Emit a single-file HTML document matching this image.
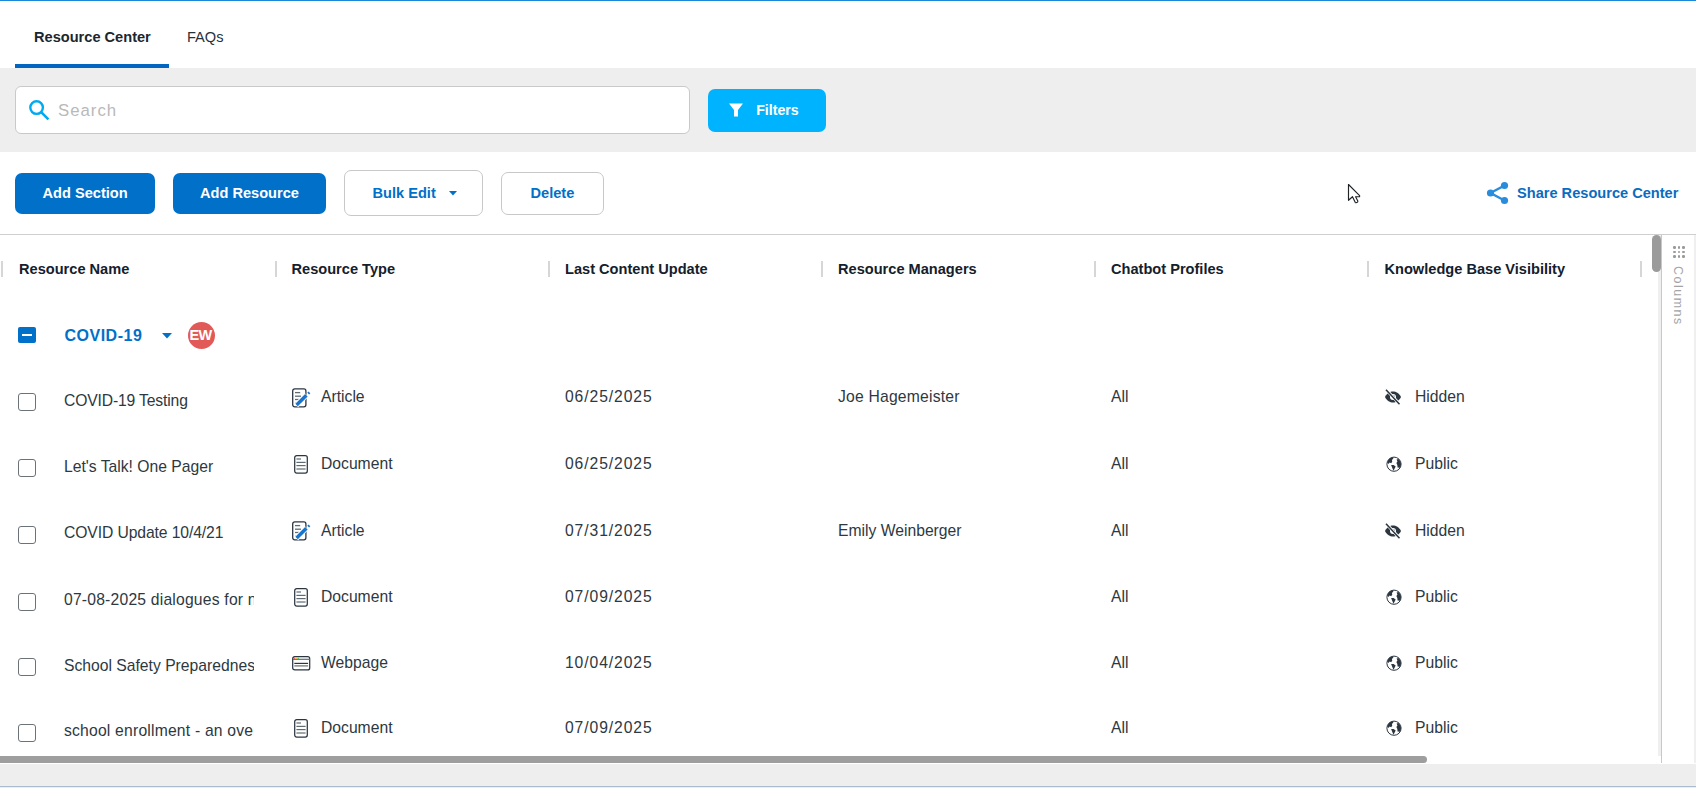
<!DOCTYPE html>
<html><head><meta charset="utf-8"><style>
html,body{margin:0;padding:0;width:1696px;height:788px;overflow:hidden;background:#fff;font-family:"Liberation Sans", sans-serif;}
.t{position:absolute;white-space:nowrap;}
.r{position:absolute;}
</style></head><body>
<div class="r" style="left:0px;top:0px;width:1696px;height:1px;background:#1a88d8"></div>
<div class="t" style="left:34px;top:30.00px;font-size:14.6px;line-height:14.6px;font-weight:700;color:#1b2631;">Resource Center</div>
<div class="t" style="left:187px;top:30.00px;font-size:14.6px;line-height:14.6px;font-weight:400;color:#26313b;">FAQs</div>
<div class="r" style="left:15px;top:64px;width:154px;height:4px;background:#0066c0"></div>
<div class="r" style="left:0px;top:68px;width:1696px;height:84px;background:#eeeeee"></div>
<div class="r" style="left:15px;top:86px;width:675px;height:48px;background:#fff;border:1px solid #c9c9c9;border-radius:6px;box-sizing:border-box"></div>
<svg class="r" style="left:28px;top:99px" width="22" height="22" viewBox="0 0 22 22"><circle cx="8.6" cy="8.6" r="6.3" fill="none" stroke="#00aaf0" stroke-width="2.4"/><line x1="13.2" y1="13.2" x2="20.4" y2="20.4" stroke="#00aaf0" stroke-width="2.6"/></svg>
<div class="t" style="left:58px;top:103.00px;font-size:16.8px;line-height:16.8px;font-weight:400;color:#b9b9b9;letter-spacing:1px">Search</div>
<div class="r" style="left:708px;top:89px;width:118px;height:43px;background:#00b3fe;border-radius:7px"></div>
<svg class="r" style="left:728px;top:102px" width="16" height="16" viewBox="0 0 16 16"><path d="M1 1.5H15L10 8V14.5H6V8Z" fill="#fff"/></svg>
<div class="t" style="left:756.2px;top:103.00px;font-size:14.2px;line-height:14.2px;font-weight:700;color:#fff;">Filters</div>
<div class="r" style="left:15px;top:173px;width:140px;height:41px;background:#0070c9;border-radius:7px"></div>
<div class="t" style="left:42.5px;top:186.00px;font-size:14.6px;line-height:14.6px;font-weight:700;color:#fff;">Add Section</div>
<div class="r" style="left:173px;top:173px;width:153px;height:41px;background:#0070c9;border-radius:7px"></div>
<div class="t" style="left:200px;top:186.00px;font-size:14.6px;line-height:14.6px;font-weight:700;color:#fff;">Add Resource</div>
<div class="r" style="left:344px;top:170px;width:139px;height:46px;background:#fff;border:1px solid #c8c8c8;border-radius:7px;box-sizing:border-box"></div>
<div class="t" style="left:372.5px;top:186.00px;font-size:14.6px;line-height:14.6px;font-weight:700;color:#0070c9;">Bulk Edit</div>
<svg class="r" style="left:449px;top:191px" width="8" height="5" viewBox="0 0 8 5"><path d="M0 0H8L4 4.6Z" fill="#0070c9"/></svg>
<div class="r" style="left:501px;top:172px;width:103px;height:43px;background:#fff;border:1px solid #c8c8c8;border-radius:7px;box-sizing:border-box"></div>
<div class="t" style="left:530.5px;top:186.00px;font-size:14.6px;line-height:14.6px;font-weight:700;color:#0070c9;">Delete</div>
<svg class="r" style="left:1486px;top:181px" width="23" height="24" viewBox="0 0 23 24"><g fill="#2a8ddb"><circle cx="18.5" cy="4.5" r="3.6"/><circle cx="4.5" cy="12" r="3.6"/><circle cx="18.5" cy="19.5" r="3.6"/></g><path d="M18.5 4.5L4.5 12L18.5 19.5" fill="none" stroke="#2a8ddb" stroke-width="2.4"/></svg>
<div class="t" style="left:1517px;top:186.00px;font-size:14.6px;line-height:14.6px;font-weight:700;color:#0a6cc0;">Share Resource Center</div>
<svg class="r" style="left:1347px;top:183px" width="16" height="22" viewBox="0 0 16 22"><path d="M1.5 1.5V17.3L5.5 13.7L8.2 19.3Q8.7 20 9.5 19.6L10.3 19.2Q11 18.8 10.8 18.1L8.6 13.7H12.6V12.6Z" fill="#fff" stroke="#1d2326" stroke-width="1.15" stroke-linejoin="round"/></svg>
<div class="r" style="left:0px;top:234px;width:1696px;height:1px;background:#cfcfcf"></div>
<div class="r" style="left:1px;top:261px;width:2px;height:16px;background:#d6d6d6"></div>
<div class="r" style="left:275px;top:261px;width:2px;height:16px;background:#d6d6d6"></div>
<div class="r" style="left:548px;top:261px;width:2px;height:16px;background:#d6d6d6"></div>
<div class="r" style="left:821px;top:261px;width:2px;height:16px;background:#d6d6d6"></div>
<div class="r" style="left:1094px;top:261px;width:2px;height:16px;background:#d6d6d6"></div>
<div class="r" style="left:1367px;top:261px;width:2px;height:16px;background:#d6d6d6"></div>
<div class="r" style="left:1640px;top:261px;width:2px;height:16px;background:#d6d6d6"></div>
<div class="t" style="left:19px;top:262.00px;font-size:14.6px;line-height:14.6px;font-weight:700;color:#14202c;">Resource Name</div>
<div class="t" style="left:291.5px;top:262.00px;font-size:14.6px;line-height:14.6px;font-weight:700;color:#14202c;">Resource Type</div>
<div class="t" style="left:565px;top:262.00px;font-size:14.6px;line-height:14.6px;font-weight:700;color:#14202c;">Last Content Update</div>
<div class="t" style="left:838px;top:262.00px;font-size:14.6px;line-height:14.6px;font-weight:700;color:#14202c;">Resource Managers</div>
<div class="t" style="left:1111px;top:262.00px;font-size:14.6px;line-height:14.6px;font-weight:700;color:#14202c;">Chatbot Profiles</div>
<div class="t" style="left:1384.5px;top:262.00px;font-size:14.6px;line-height:14.6px;font-weight:700;color:#14202c;">Knowledge Base Visibility</div>
<div class="r" style="left:18px;top:327px;width:18px;height:16px;background:#0070c9;border-radius:2px"></div>
<div class="r" style="left:22px;top:334.4px;width:10px;height:1.6px;background:#fff"></div>
<div class="t" style="left:64.5px;top:328.00px;font-size:16px;line-height:16px;font-weight:700;color:#0070c9;letter-spacing:0.5px">COVID-19</div>
<svg class="r" style="left:162px;top:333px" width="10" height="6" viewBox="0 0 10 6"><path d="M0 0H10L5 5.5Z" fill="#0070c9"/></svg>
<div class="r" style="left:188px;top:322px;width:27px;height:27px;border-radius:50%;background:#e25a58"></div>
<div class="t" style="left:189.5px;top:328.00px;font-size:14.5px;line-height:14.5px;font-weight:700;color:#fff;letter-spacing:-0.6px">EW</div>
<div class="r" style="left:18px;top:393px;width:18px;height:18px;border:1.3px solid #6b7379;border-radius:3px;box-sizing:border-box;background:#fff"></div>
<div class="t" style="left:64px;top:393.00px;font-size:15.7px;line-height:15.7px;font-weight:400;color:#2e3841;width:190px;overflow:hidden;letter-spacing:-0.15px">COVID-19 Testing</div>
<svg class="r" style="left:292px;top:388px" width="19" height="20" viewBox="0 0 19 20"><rect x="0.7" y="0.9" width="13.2" height="17.9" rx="2" fill="#fff" stroke="#2b3641" stroke-width="1.3"/><g stroke="#5f6b72" stroke-width="1.3"><line x1="3" y1="4.6" x2="8.2" y2="4.6"/><line x1="3" y1="8.2" x2="9" y2="8.2"/><line x1="3" y1="11.5" x2="7" y2="11.5"/><line x1="3" y1="14.9" x2="5" y2="14.9"/></g><path d="M4.2 17.3L14.6 6.9" stroke="#fff" stroke-width="5.4"/><path d="M4.6 17L14.4 7.2" stroke="#1874cd" stroke-width="3.5"/><path d="M16.2 5.6L17.4 4.4" stroke="#1874cd" stroke-width="2.6"/></svg>
<div class="t" style="left:321px;top:389.00px;font-size:15.7px;line-height:15.7px;font-weight:400;color:#2e3841;">Article</div>
<div class="t" style="left:565px;top:389.00px;font-size:15.7px;line-height:15.7px;font-weight:400;color:#2e3841;letter-spacing:0.9px">06/25/2025</div>
<div class="t" style="left:838px;top:389.00px;font-size:15.7px;line-height:15.7px;font-weight:400;color:#2e3841;letter-spacing:0.2px">Joe Hagemeister</div>
<div class="t" style="left:1111px;top:389.00px;font-size:15.7px;line-height:15.7px;font-weight:400;color:#2e3841;">All</div>
<svg class="r" style="left:1384px;top:389px" width="18" height="16" viewBox="0 0 18 16"><path d="M1 8C3 4 6 2.5 9 2.5S15 4 17 8C15 12 12 13.5 9 13.5S3 12 1 8Z" fill="#2b3641"/><circle cx="9" cy="8" r="3" fill="#fff"/><circle cx="9.3" cy="7.6" r="1.4" fill="#2b3641"/><path d="M2 0.5L15.5 15" stroke="#fff" stroke-width="3"/><path d="M2 0.8L15.5 15.2" stroke="#2b3641" stroke-width="1.5"/></svg>
<div class="t" style="left:1415px;top:389.00px;font-size:15.7px;line-height:15.7px;font-weight:400;color:#2e3841;">Hidden</div>
<div class="r" style="left:18px;top:459px;width:18px;height:18px;border:1.3px solid #6b7379;border-radius:3px;box-sizing:border-box;background:#fff"></div>
<div class="t" style="left:64px;top:459.00px;font-size:15.7px;line-height:15.7px;font-weight:400;color:#2e3841;width:190px;overflow:hidden;letter-spacing:0px">Let's Talk! One Pager</div>
<svg class="r" style="left:294px;top:455px" width="15" height="19" viewBox="0 0 15 19"><rect x="0.7" y="0.7" width="12.6" height="17.4" rx="2" fill="#fff" stroke="#2b3641" stroke-width="1.25"/><g stroke="#5f6b72" stroke-width="1.2"><line x1="2.4" y1="4" x2="7" y2="4"/><line x1="2.4" y1="7.4" x2="11.6" y2="7.4"/><line x1="2.4" y1="10.6" x2="11.6" y2="10.6"/><line x1="2.4" y1="14" x2="11.6" y2="14"/></g></svg>
<div class="t" style="left:321px;top:456.00px;font-size:15.7px;line-height:15.7px;font-weight:400;color:#2e3841;">Document</div>
<div class="t" style="left:565px;top:456.00px;font-size:15.7px;line-height:15.7px;font-weight:400;color:#2e3841;letter-spacing:0.9px">06/25/2025</div>
<div class="t" style="left:1111px;top:456.00px;font-size:15.7px;line-height:15.7px;font-weight:400;color:#2e3841;">All</div>
<svg class="r" style="left:1385.5px;top:456px" width="16" height="17" viewBox="0 0 16 17"><circle cx="8" cy="8.2" r="7.1" fill="#fff" stroke="#2b3641" stroke-width="1"/><path d="M1.3 6.6C1.8 4.2 3.4 2.4 5.6 1.6L7.4 1.4L7.2 2.8L5.9 4L6.3 5.5L5.2 7.2L3.6 6.4L2.6 8Z" fill="#2b3641"/><path d="M10.6 3.6L12.3 2.9C14 4.2 15 6.2 15 8.3C15 9.6 14.6 10.8 13.9 11.8L11.6 11.4L11.3 9L10.4 7.1L11.4 5.5Z" fill="#2b3641"/><path d="M5.1 9L7.6 9L9.7 10.6L8.8 12.3L7.5 14.8L6.4 12.2Z" fill="#2b3641"/></svg>
<div class="t" style="left:1415px;top:456.00px;font-size:15.7px;line-height:15.7px;font-weight:400;color:#2e3841;">Public</div>
<div class="r" style="left:18px;top:526px;width:18px;height:18px;border:1.3px solid #6b7379;border-radius:3px;box-sizing:border-box;background:#fff"></div>
<div class="t" style="left:64px;top:525.00px;font-size:15.7px;line-height:15.7px;font-weight:400;color:#2e3841;width:190px;overflow:hidden;letter-spacing:-0.1px">COVID Update 10/4/21</div>
<svg class="r" style="left:292px;top:521px" width="19" height="20" viewBox="0 0 19 20"><rect x="0.7" y="0.9" width="13.2" height="17.9" rx="2" fill="#fff" stroke="#2b3641" stroke-width="1.3"/><g stroke="#5f6b72" stroke-width="1.3"><line x1="3" y1="4.6" x2="8.2" y2="4.6"/><line x1="3" y1="8.2" x2="9" y2="8.2"/><line x1="3" y1="11.5" x2="7" y2="11.5"/><line x1="3" y1="14.9" x2="5" y2="14.9"/></g><path d="M4.2 17.3L14.6 6.9" stroke="#fff" stroke-width="5.4"/><path d="M4.6 17L14.4 7.2" stroke="#1874cd" stroke-width="3.5"/><path d="M16.2 5.6L17.4 4.4" stroke="#1874cd" stroke-width="2.6"/></svg>
<div class="t" style="left:321px;top:523.00px;font-size:15.7px;line-height:15.7px;font-weight:400;color:#2e3841;">Article</div>
<div class="t" style="left:565px;top:523.00px;font-size:15.7px;line-height:15.7px;font-weight:400;color:#2e3841;letter-spacing:0.9px">07/31/2025</div>
<div class="t" style="left:838px;top:523.00px;font-size:15.7px;line-height:15.7px;font-weight:400;color:#2e3841;letter-spacing:0px">Emily Weinberger</div>
<div class="t" style="left:1111px;top:523.00px;font-size:15.7px;line-height:15.7px;font-weight:400;color:#2e3841;">All</div>
<svg class="r" style="left:1384px;top:523px" width="18" height="16" viewBox="0 0 18 16"><path d="M1 8C3 4 6 2.5 9 2.5S15 4 17 8C15 12 12 13.5 9 13.5S3 12 1 8Z" fill="#2b3641"/><circle cx="9" cy="8" r="3" fill="#fff"/><circle cx="9.3" cy="7.6" r="1.4" fill="#2b3641"/><path d="M2 0.5L15.5 15" stroke="#fff" stroke-width="3"/><path d="M2 0.8L15.5 15.2" stroke="#2b3641" stroke-width="1.5"/></svg>
<div class="t" style="left:1415px;top:523.00px;font-size:15.7px;line-height:15.7px;font-weight:400;color:#2e3841;">Hidden</div>
<div class="r" style="left:18px;top:593px;width:18px;height:18px;border:1.3px solid #6b7379;border-radius:3px;box-sizing:border-box;background:#fff"></div>
<div class="t" style="left:64px;top:592.00px;font-size:15.7px;line-height:15.7px;font-weight:400;color:#2e3841;width:190px;overflow:hidden;letter-spacing:0.2px">07-08-2025 dialogues for new families</div>
<svg class="r" style="left:294px;top:588px" width="15" height="19" viewBox="0 0 15 19"><rect x="0.7" y="0.7" width="12.6" height="17.4" rx="2" fill="#fff" stroke="#2b3641" stroke-width="1.25"/><g stroke="#5f6b72" stroke-width="1.2"><line x1="2.4" y1="4" x2="7" y2="4"/><line x1="2.4" y1="7.4" x2="11.6" y2="7.4"/><line x1="2.4" y1="10.6" x2="11.6" y2="10.6"/><line x1="2.4" y1="14" x2="11.6" y2="14"/></g></svg>
<div class="t" style="left:321px;top:589.00px;font-size:15.7px;line-height:15.7px;font-weight:400;color:#2e3841;">Document</div>
<div class="t" style="left:565px;top:589.00px;font-size:15.7px;line-height:15.7px;font-weight:400;color:#2e3841;letter-spacing:0.9px">07/09/2025</div>
<div class="t" style="left:1111px;top:589.00px;font-size:15.7px;line-height:15.7px;font-weight:400;color:#2e3841;">All</div>
<svg class="r" style="left:1385.5px;top:589px" width="16" height="17" viewBox="0 0 16 17"><circle cx="8" cy="8.2" r="7.1" fill="#fff" stroke="#2b3641" stroke-width="1"/><path d="M1.3 6.6C1.8 4.2 3.4 2.4 5.6 1.6L7.4 1.4L7.2 2.8L5.9 4L6.3 5.5L5.2 7.2L3.6 6.4L2.6 8Z" fill="#2b3641"/><path d="M10.6 3.6L12.3 2.9C14 4.2 15 6.2 15 8.3C15 9.6 14.6 10.8 13.9 11.8L11.6 11.4L11.3 9L10.4 7.1L11.4 5.5Z" fill="#2b3641"/><path d="M5.1 9L7.6 9L9.7 10.6L8.8 12.3L7.5 14.8L6.4 12.2Z" fill="#2b3641"/></svg>
<div class="t" style="left:1415px;top:589.00px;font-size:15.7px;line-height:15.7px;font-weight:400;color:#2e3841;">Public</div>
<div class="r" style="left:18px;top:658px;width:18px;height:18px;border:1.3px solid #6b7379;border-radius:3px;box-sizing:border-box;background:#fff"></div>
<div class="t" style="left:64px;top:658.00px;font-size:15.7px;line-height:15.7px;font-weight:400;color:#2e3841;width:190px;overflow:hidden;letter-spacing:0px">School Safety Preparedness</div>
<svg class="r" style="left:292px;top:656px" width="19" height="15" viewBox="0 0 19 15"><rect x="0.7" y="0.7" width="17" height="13.2" rx="2" fill="#fff" stroke="#2b3641" stroke-width="1.25"/><line x1="1" y1="3.3" x2="18" y2="3.3" stroke="#5f6b72" stroke-width="1.2"/><circle cx="2.6" cy="2.2" r="0.7" fill="#e55"/><circle cx="4.4" cy="2.2" r="0.7" fill="#eb3"/><circle cx="6.2" cy="2.2" r="0.7" fill="#3b5"/><line x1="2.3" y1="7.4" x2="16.1" y2="7.4" stroke="#2b3641" stroke-width="1.2"/><line x1="2.3" y1="9.9" x2="16.1" y2="9.9" stroke="#6f6a66" stroke-width="1.2"/></svg>
<div class="t" style="left:321px;top:655.00px;font-size:15.7px;line-height:15.7px;font-weight:400;color:#2e3841;">Webpage</div>
<div class="t" style="left:565px;top:655.00px;font-size:15.7px;line-height:15.7px;font-weight:400;color:#2e3841;letter-spacing:0.9px">10/04/2025</div>
<div class="t" style="left:1111px;top:655.00px;font-size:15.7px;line-height:15.7px;font-weight:400;color:#2e3841;">All</div>
<svg class="r" style="left:1385.5px;top:655px" width="16" height="17" viewBox="0 0 16 17"><circle cx="8" cy="8.2" r="7.1" fill="#fff" stroke="#2b3641" stroke-width="1"/><path d="M1.3 6.6C1.8 4.2 3.4 2.4 5.6 1.6L7.4 1.4L7.2 2.8L5.9 4L6.3 5.5L5.2 7.2L3.6 6.4L2.6 8Z" fill="#2b3641"/><path d="M10.6 3.6L12.3 2.9C14 4.2 15 6.2 15 8.3C15 9.6 14.6 10.8 13.9 11.8L11.6 11.4L11.3 9L10.4 7.1L11.4 5.5Z" fill="#2b3641"/><path d="M5.1 9L7.6 9L9.7 10.6L8.8 12.3L7.5 14.8L6.4 12.2Z" fill="#2b3641"/></svg>
<div class="t" style="left:1415px;top:655.00px;font-size:15.7px;line-height:15.7px;font-weight:400;color:#2e3841;">Public</div>
<div class="r" style="left:18px;top:724px;width:18px;height:18px;border:1.3px solid #6b7379;border-radius:3px;box-sizing:border-box;background:#fff"></div>
<div class="t" style="left:64px;top:723.00px;font-size:15.7px;line-height:15.7px;font-weight:400;color:#2e3841;width:190px;overflow:hidden;letter-spacing:0.2px">school enrollment - an overview</div>
<svg class="r" style="left:294px;top:719px" width="15" height="19" viewBox="0 0 15 19"><rect x="0.7" y="0.7" width="12.6" height="17.4" rx="2" fill="#fff" stroke="#2b3641" stroke-width="1.25"/><g stroke="#5f6b72" stroke-width="1.2"><line x1="2.4" y1="4" x2="7" y2="4"/><line x1="2.4" y1="7.4" x2="11.6" y2="7.4"/><line x1="2.4" y1="10.6" x2="11.6" y2="10.6"/><line x1="2.4" y1="14" x2="11.6" y2="14"/></g></svg>
<div class="t" style="left:321px;top:720.00px;font-size:15.7px;line-height:15.7px;font-weight:400;color:#2e3841;">Document</div>
<div class="t" style="left:565px;top:720.00px;font-size:15.7px;line-height:15.7px;font-weight:400;color:#2e3841;letter-spacing:0.9px">07/09/2025</div>
<div class="t" style="left:1111px;top:720.00px;font-size:15.7px;line-height:15.7px;font-weight:400;color:#2e3841;">All</div>
<svg class="r" style="left:1385.5px;top:720px" width="16" height="17" viewBox="0 0 16 17"><circle cx="8" cy="8.2" r="7.1" fill="#fff" stroke="#2b3641" stroke-width="1"/><path d="M1.3 6.6C1.8 4.2 3.4 2.4 5.6 1.6L7.4 1.4L7.2 2.8L5.9 4L6.3 5.5L5.2 7.2L3.6 6.4L2.6 8Z" fill="#2b3641"/><path d="M10.6 3.6L12.3 2.9C14 4.2 15 6.2 15 8.3C15 9.6 14.6 10.8 13.9 11.8L11.6 11.4L11.3 9L10.4 7.1L11.4 5.5Z" fill="#2b3641"/><path d="M5.1 9L7.6 9L9.7 10.6L8.8 12.3L7.5 14.8L6.4 12.2Z" fill="#2b3641"/></svg>
<div class="t" style="left:1415px;top:720.00px;font-size:15.7px;line-height:15.7px;font-weight:400;color:#2e3841;">Public</div>
<div class="r" style="left:1658px;top:235px;width:3px;height:521px;background:#efefef"></div>
<div class="r" style="left:1661px;top:235px;width:1px;height:528px;background:#c8c8c8"></div>
<div class="r" style="left:1652px;top:235px;width:9px;height:37px;border-radius:5px;background:#9b9b9b"></div>
<div class="r" style="left:1662px;top:235px;width:32px;height:528px;background:#fff"></div>
<div class="r" style="left:1694px;top:235px;width:2px;height:528px;background:#efefef"></div>
<div class="r" style="left:1673.0px;top:246.1px;width:2.6px;height:2.6px;border-radius:50%;background:#9a9a9a"></div>
<div class="r" style="left:1677.7px;top:246.1px;width:2.6px;height:2.6px;border-radius:50%;background:#9a9a9a"></div>
<div class="r" style="left:1682.4px;top:246.1px;width:2.6px;height:2.6px;border-radius:50%;background:#9a9a9a"></div>
<div class="r" style="left:1673.0px;top:250.6px;width:2.6px;height:2.6px;border-radius:50%;background:#9a9a9a"></div>
<div class="r" style="left:1677.7px;top:250.6px;width:2.6px;height:2.6px;border-radius:50%;background:#9a9a9a"></div>
<div class="r" style="left:1682.4px;top:250.6px;width:2.6px;height:2.6px;border-radius:50%;background:#9a9a9a"></div>
<div class="r" style="left:1673.0px;top:255.1px;width:2.6px;height:2.6px;border-radius:50%;background:#9a9a9a"></div>
<div class="r" style="left:1677.7px;top:255.1px;width:2.6px;height:2.6px;border-radius:50%;background:#9a9a9a"></div>
<div class="r" style="left:1682.4px;top:255.1px;width:2.6px;height:2.6px;border-radius:50%;background:#9a9a9a"></div>
<div class="t" style="left:1672px;top:266px;width:12px;height:62px;writing-mode:vertical-rl;font-size:12.5px;line-height:12px;color:#a4a4a4;font-weight:400;letter-spacing:1.5px">Columns</div>
<div class="r" style="left:0px;top:756px;width:1427px;height:7px;border-radius:0 4px 4px 0;background:#9e9e9e"></div>
<div class="r" style="left:0px;top:764px;width:1696px;height:22px;background:#eeeeee"></div>
<div class="r" style="left:0px;top:786px;width:1696px;height:1px;background:#aabccd"></div>
<div class="r" style="left:0px;top:787px;width:1696px;height:1px;background:#e3eef8"></div>
</body></html>
